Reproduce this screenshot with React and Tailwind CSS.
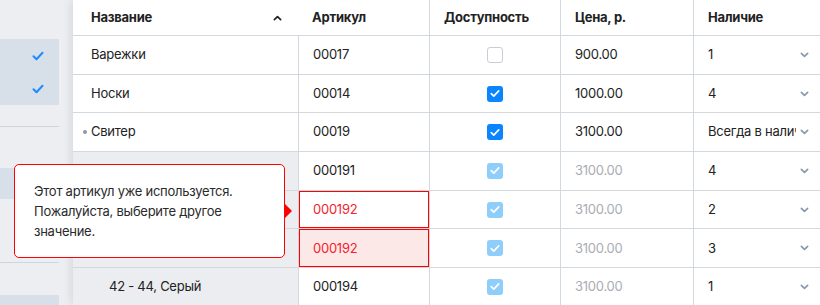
import React from "react";

const rows = [
  { name: "Варежки", art: "00017", check: "off", price: "900.00", stock: "1" },
  { name: "Носки", art: "00014", check: "on", price: "1000.00", stock: "4" },
  { name: "Свитер", bullet: true, art: "00019", check: "on", price: "3100.00", stock: "Всегда в наличии" },
  { name: "", child: true, art: "000191", check: "dis", price: "3100.00", stock: "4" },
  { name: "", child: true, art: "000192", error: "line", check: "dis", price: "3100.00", stock: "2" },
  { name: "", child: true, art: "000192", error: "fill", check: "dis", price: "3100.00", stock: "3" },
  { name: "42 - 44, Серый", child: true, indent: true, art: "000194", check: "dis", price: "3100.00", stock: "1" },
];

function Tick({ className = "", color = "#fff" }) {
  return (
    <svg viewBox="0 0 12 10" className={className} fill="none">
      <path d="M1.5 5.2l3 3 6-6.4" stroke={color} strokeWidth="2" strokeLinecap="round" strokeLinejoin="round" />
    </svg>
  );
}

function Checkbox({ state }) {
  if (state === "off")
    return <div className="w-[16px] h-[16px] rounded-[3px] border border-[#c9ced6] bg-white" />;
  const bg = state === "on" ? "bg-[#0a84ff]" : "bg-[#8fcdfa]";
  return (
    <div className={`w-[16px] h-[16px] rounded-[3px] ${bg} flex items-center justify-center`}>
      <Tick className="w-[10px] h-[9px]" />
    </div>
  );
}

function Chevron() {
  return (
    <svg viewBox="0 0 10 6" className="w-[9px] h-[6px] shrink-0" fill="none">
      <path d="M1.5 1.2L5 4.6l3.5-3.4" stroke="#8796ab" strokeWidth="1.8" strokeLinecap="round" strokeLinejoin="round" />
    </svg>
  );
}

export default function App() {
  const cell = "h-[38.7px] border-b border-[#d3d8df] flex items-center";
  const head = "h-[36px] border-b border-[#d3d8df] flex items-center font-bold";
  return (
    <div className="relative w-[820px] h-[305px] overflow-hidden flex bg-[#eceef1] text-[13px] tracking-[-0.25px] text-[#222]" style={{ fontFamily: "Inter, 'Noto Sans', sans-serif" }}>
      {/* sidebar */}
      <div className="w-[73px] shrink-0 flex flex-col pt-[39px]">
        <div className="w-[59px] h-[66px] bg-[#d7dfe9] flex flex-col">
          <div className="h-[33px] flex items-center justify-end pr-[15px]">
            <Tick className="w-[12px] h-[10px]" color="#1a8cff" />
          </div>
          <div className="h-[33px] flex items-center justify-end pr-[15px]">
            <Tick className="w-[12px] h-[10px]" color="#1a8cff" />
          </div>
        </div>
        <div className="w-[59px] h-[22px] border-b border-[#cfd5dd]" />
        <div className="w-[59px] h-[42px]" />
        <div className="w-[59px] h-[32px] bg-[#d7dfe9]" />
        <div className="w-[59px] h-[65px] border-b border-[#cfd5dd]" />
        <div className="w-[59px] h-[33px]" />
        <div className="w-[59px] h-[10px] bg-[#d7dfe9]" />
      </div>

      {/* table */}
      <div className="flex-1 bg-white shadow-[-3px_0_8px_rgba(0,0,0,0.08)] grid grid-cols-[225px_131px_131px_133px_1fr] content-start">
        <div className={`${head} justify-between pl-[18px] pr-[16px]`}>
          <span>Название</span>
          <svg viewBox="0 0 10 6" className="w-[9px] h-[6px]" fill="none">
            <path d="M1.5 4.8L5 1.4l3.5 3.4" stroke="#222" strokeWidth="1.9" strokeLinecap="round" strokeLinejoin="round" />
          </svg>
        </div>
        <div className={`${head} pl-[14px]`}>Артикул</div>
        <div className={`${head} border-l pl-[14px]`}>Доступность</div>
        <div className={`${head} border-l pl-[14px]`}>Цена, р.</div>
        <div className={`${head} border-l pl-[14px]`}>Наличие</div>

        {rows.map((r, i) => (
          <React.Fragment key={i}>
            <div className={`${cell} ${r.child ? "bg-[#ebedf0]" : "bg-white"} ${r.indent ? "pl-[36px]" : "pl-[18px]"}`}>
              {r.bullet && <span className="w-[4px] h-[4px] rounded-full bg-[#8b97a8] ml-[-8px] mr-[4px]" />}
              {r.name}
            </div>
            <div
              className={`${cell} border-l pl-[14px] ${
                r.error ? "text-[#f5222d] shadow-[inset_0_0_0_1px_#f00]" : ""
              } ${r.error === "fill" ? "bg-[#fde8e8]" : ""}`}
            >
              {r.art}
            </div>
            <div className={`${cell} border-l justify-center`}>
              <Checkbox state={r.check} />
            </div>
            <div className={`${cell} border-l pl-[14px] ${r.child ? "text-[#a9adb3]" : ""}`}>{r.price}</div>
            <div className={`${cell} border-l pl-[14px] pr-[11px] justify-between`}>
              <span className="whitespace-nowrap overflow-hidden w-[88px]">{r.stock}</span>
              <Chevron />
            </div>
          </React.Fragment>
        ))}
      </div>

      {/* error tooltip */}
      <div className="absolute left-[14px] top-[164px] w-[271px] h-[94px] bg-white border border-[#f00] rounded-[5px] pl-[19px] flex flex-col justify-center leading-[20px] text-[#2a2a2a]">
        <span>Этот артикул уже используется.</span>
        <span>Пожалуйста, выберите другое</span>
        <span>значение.</span>
        <svg viewBox="0 0 8 16" className="absolute right-[-8px] top-[38px] w-[8px] h-[16px]">
          <path d="M0 0L8 8L0 16Z" fill="#f00" />
        </svg>
      </div>
    </div>
  );
}
